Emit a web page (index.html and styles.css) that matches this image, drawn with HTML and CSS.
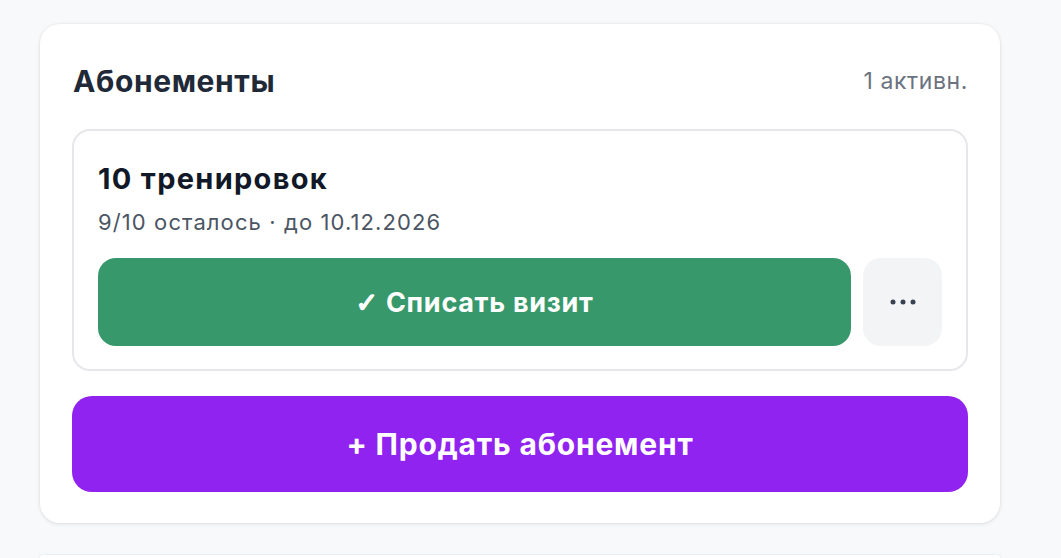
FILE: index.html
```html
<!DOCTYPE html>
<html lang="ru">
<head>
<meta charset="utf-8">
<link rel="stylesheet" href="styles.css">
</head>
<body>
<main class="page">
  <section class="card">
    <header class="card-head">
      <h2 class="card-title">Абонементы</h2>
      <span class="card-meta">1 активн.</span>
    </header>
    <div class="sub-card">
      <div class="sub-title">10 тренировок</div>
      <div class="sub-info">9/10 осталось · до 10.12.2026</div>
      <div class="sub-actions">
        <button class="btn btn-green"><span class="check">✓</span>&nbsp;Списать визит</button>
        <button class="btn btn-more" aria-label="Ещё">
          <svg width="28" height="8" viewBox="0 0 28 8"><circle cx="4" cy="4" r="2.5" fill="#374151"/><circle cx="14" cy="4" r="2.5" fill="#374151"/><circle cx="24" cy="4" r="2.5" fill="#374151"/></svg>
        </button>
      </div>
    </div>
    <button class="btn btn-purple">+ Продать абонемент</button>
  </section>
  <section class="card card-next"></section>
</main>
</body>
</html>
```

FILE: styles.css
```css
* { box-sizing: border-box; }
html, body { margin: 0; padding: 0; }
html { height: 558px; overflow: hidden; }
body {
  background: #f8f9fb;
  font-family: "Inter", "Noto Sans", sans-serif;
  color: #1f2937;
  height: 558px;
  overflow: hidden;
}
.page {
  padding: 24px 61px 0 40px;
  display: flex;
  flex-direction: column;
  gap: 32px;
}
.card {
  width: 960px;
  background: #fff;
  border-radius: 20px;
  box-shadow: 0 1px 4px rgba(0,0,0,0.10), 0 0 0 1px rgba(0,0,0,0.02);
  padding: 32px 32px 31px 32px;
  flex-shrink: 0;
}
.card-next { height: 3px; padding: 0; border-radius: 20px 20px 0 0; }
.card-head {
  height: 50px;
  display: flex;
  align-items: center;
  justify-content: space-between;
  margin-bottom: 23px;
}
.card-title {
  margin: 0 0 0 1px;
  font-size: 30px;
  font-weight: 700;
  color: #1f2937;
  letter-spacing: 0.6px;
}
.card-meta {
  font-size: 23px;
  color: #6b7280;
  letter-spacing: 0.6px;
}
.sub-card {
  border: 2px solid #e5e7eb;
  border-radius: 18px;
  padding: 28px 24px 23px 24px;
}
.sub-title {
  font-size: 29px;
  line-height: 40px;
  font-weight: 700;
  color: #111827;
  letter-spacing: 1.3px;
}
.sub-info {
  margin-top: 8px;
  font-size: 22px;
  line-height: 30px;
  color: #4b5563;
  letter-spacing: 1.1px;
}
.sub-actions {
  margin-top: 21px;
  display: flex;
  gap: 12px;
}
.btn {
  border: 0;
  font-family: "Inter", "DejaVu Sans", sans-serif;
  font-weight: 700;
  color: #fff;
  cursor: pointer;
  display: flex;
  align-items: center;
  justify-content: center;
}
.check {
  font-family: "DejaVu Sans", sans-serif;
  font-weight: 700;
  -webkit-text-stroke: 1.4px #fff;
}
.btn-green {
  flex: 1;
  height: 88px;
  border-radius: 18px;
  background: #37996b;
  font-size: 27px;
  letter-spacing: 0.7px;
}
.btn-more {
  width: 79px;
  height: 88px;
  border-radius: 18px;
  background: #f3f4f6;
}
.btn-purple {
  width: 100%;
  margin-top: 25px;
  height: 96px;
  border-radius: 20px;
  background: #9023ef;
  font-size: 30px;
  letter-spacing: 0.8px;
}
```
